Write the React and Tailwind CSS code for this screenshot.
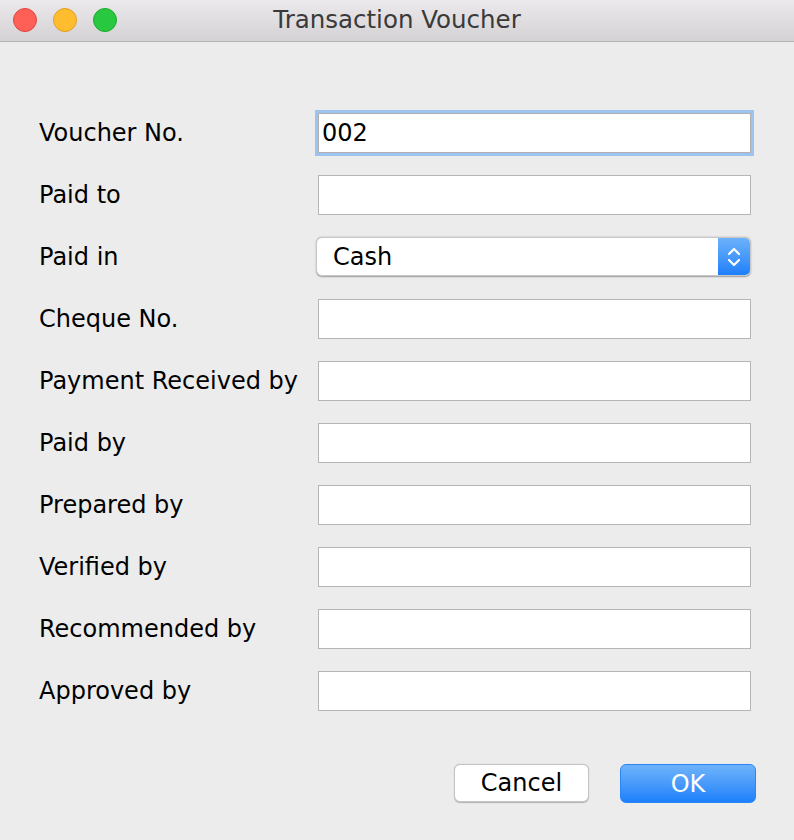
import React from "react";

const rows = [
  "Paid to",
  "Paid in",
  "Cheque No.",
  "Payment Received by",
  "Paid by",
  "Prepared by",
  "Verified by",
  "Recommended by",
  "Approved by",
];

function Field() {
  return <div className="h-[40px] w-[433px] bg-white border border-[#b5b5b5]" />;
}

export default function App() {
  return (
    <div className="w-[794px] h-[840px] bg-[#ececec] flex flex-col" style={{ fontFamily: '"DejaVu Sans", sans-serif' }}>
      <div className="relative h-[42px] shrink-0 bg-gradient-to-b from-[#ebe9eb] to-[#d4d2d4] border-b border-[#b4b4b4] flex items-center justify-center">
        <div className="absolute left-[13px] top-[8px] flex gap-[16px]">
          <div className="w-[24px] h-[24px] rounded-full bg-[#fe5f57] border border-[#e14640]" />
          <div className="w-[24px] h-[24px] rounded-full bg-[#febc2e] border border-[#dea123]" />
          <div className="w-[24px] h-[24px] rounded-full bg-[#28c840] border border-[#1aab29]" />
        </div>
        <span className="text-[24.5px] text-[#3a3a3a] leading-none -mt-[1px]">Transaction Voucher</span>
      </div>

      <div className="flex flex-col gap-[22px] pt-[71px] pl-[39px]">
        <div className="flex items-center h-[40px]">
          <div className="w-[279px] text-[24px] text-black">Voucher No.</div>
          <div className="h-[40px] w-[433px] bg-white border border-[#b0b0b0] ring-[3px] ring-[#9cc4ee] flex items-center pl-[3px] text-[24px] text-black">
            002
          </div>
        </div>
        {rows.map((r) => (
          <div key={r} className="flex items-center h-[40px]">
            <div className="w-[279px] text-[24px] text-black whitespace-nowrap">{r}</div>
            {r === "Paid in" ? (
              <div className="h-[39px] -mt-[1px] w-[435px] -ml-[2px] bg-white rounded-[6px] shadow-[0_0.5px_1.5px_rgba(0,0,0,0.35)] border border-[#c8c8c8] flex items-center overflow-hidden">
                <span className="flex-1 pl-[16px] text-[24px] text-black">Cash</span>
                <div className="w-[32px] h-full bg-gradient-to-b from-[#6cb2fb] to-[#1b7ffa] flex items-center justify-center">
                  <svg width="16" height="24" viewBox="0 0 16 24" fill="none" stroke="white" strokeWidth="2.2" strokeLinecap="round" strokeLinejoin="round">
                    <path d="M3 9 L8 4 L13 9" />
                    <path d="M3 15 L8 20 L13 15" />
                  </svg>
                </div>
              </div>
            ) : (
              <Field />
            )}
          </div>
        ))}
      </div>

      <div className="flex justify-end gap-[31px] pr-[38px] mt-[53px]">
        <button className="w-[135px] h-[38px] bg-white rounded-[6px] border border-[#c4c4c4] shadow-[0_0.5px_1px_rgba(0,0,0,0.25)] text-[24px] text-black flex items-center justify-center">
          Cancel
        </button>
        <button className="w-[136px] h-[39px] rounded-[6px] bg-gradient-to-b from-[#6db3fa] to-[#1a80fb] border border-[#2a86f5] text-[24px] text-white flex items-center justify-center">
          OK
        </button>
      </div>
    </div>
  );
}
